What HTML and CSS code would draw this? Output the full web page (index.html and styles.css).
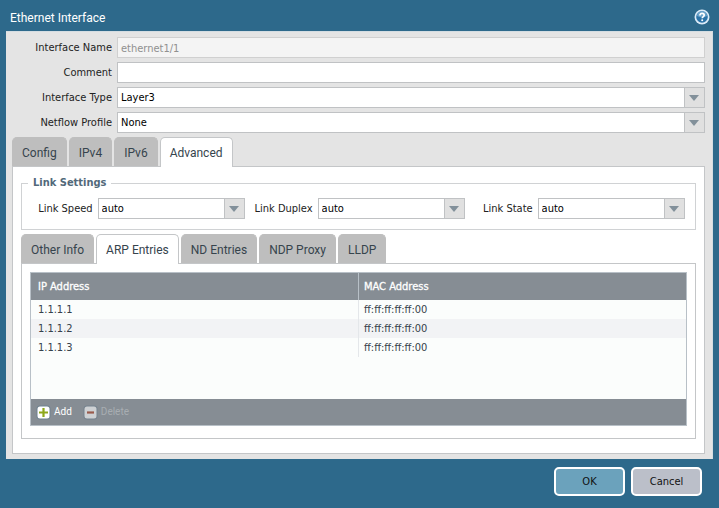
FILE: index.html
```html
<!DOCTYPE html>
<html lang="en">
<head>
	<meta charset="utf-8">
	<title>Ethernet Interface</title>
	<link rel="stylesheet" href="styles.css">
</head>
<body>
	<form class="dialog">
		<div class="titlebar">
			<h1>Ethernet Interface</h1>
			<button type="button" class="help" aria-label="Help">
				<svg width="16" height="16" viewBox="0 0 16 16">
					<circle cx="8" cy="8" r="7.5" fill="#dcebf8"/>
					<circle cx="8" cy="8" r="5.8" fill="#2c74a8"/>
					<path d="M3 7a5 5 0 0 1 10 0q-5 2.500-10 0z" fill="#6ba3ca"/>
					<path d="M5.900 6.400c0-2.800 4.300-2.600 4.300-.2 0 1.400-2 1.400-2 3.100" fill="none" stroke="#fff" stroke-width="1.700"/>
					<circle cx="8.200" cy="11.300" r="1" fill="#fff"/>
				</svg>
			</button>
		</div>

		<div class="content">
			<div class="fields">
				<label for="name">Interface Name</label>
				<input id="name" type="text" value="ethernet1/1" disabled>
				<label for="comment">Comment</label>
				<input id="comment" type="text">
				<label for="type">Interface Type</label>
				<select id="type"><option>Layer3</option></select>
				<label for="netflow">Netflow Profile</label>
				<select id="netflow"><option>None</option></select>
			</div>

			<div class="tabs" role="tablist">
				<button type="button" class="tab" role="tab">Config</button>
				<button type="button" class="tab" role="tab">IPv4</button>
				<button type="button" class="tab" role="tab">IPv6</button>
				<button type="button" class="tab active" role="tab" aria-selected="true">Advanced</button>
			</div>
			<div class="panel">
				<fieldset class="link-settings">
					<legend>Link Settings</legend>
					<div class="links">
						<div class="link">
							<label for="speed">Link Speed</label>
							<select id="speed"><option>auto</option></select>
						</div>
						<div class="link">
							<label for="duplex">Link Duplex</label>
							<select id="duplex"><option>auto</option></select>
						</div>
						<div class="link">
							<label for="state">Link State</label>
							<select id="state"><option>auto</option></select>
						</div>
					</div>
				</fieldset>

				<div class="tabs" role="tablist">
					<button type="button" class="tab" role="tab">Other Info</button>
					<button type="button" class="tab active" role="tab" aria-selected="true">ARP Entries</button>
					<button type="button" class="tab" role="tab">ND Entries</button>
					<button type="button" class="tab" role="tab">NDP Proxy</button>
					<button type="button" class="tab" role="tab">LLDP</button>
				</div>
				<div class="panel inner">
					<div class="grid">
						<table>
							<thead>
								<tr><th>IP Address</th><th>MAC Address</th></tr>
							</thead>
							<tbody>
								<tr><td>1.1.1.1</td><td>ff:ff:ff:ff:ff:00</td></tr>
								<tr><td>1.1.1.2</td><td>ff:ff:ff:ff:ff:00</td></tr>
								<tr><td>1.1.1.3</td><td>ff:ff:ff:ff:ff:00</td></tr>
							</tbody>
						</table>
						<div class="toolbar">
							<button type="button">
								<svg width="15" height="15" viewBox="0 0 15 15">
									<rect x="0.500" y="0.500" width="14" height="14" rx="3.500" fill="#6f8290"/>
									<rect x="1.500" y="1.500" width="12" height="12" rx="2.500" fill="#fff"/>
									<path d="M7.500 3v9M3 7.500h9" stroke="#8ea81c" stroke-width="2.200"/>
								</svg>
								Add
							</button>
							<button type="button" disabled>
								<svg width="15" height="15" viewBox="0 0 15 15">
									<rect x="0.500" y="0.500" width="14" height="14" rx="3.500" fill="#75828e"/>
									<rect x="1.500" y="1.500" width="12" height="12" rx="2.500" fill="#ced1d4"/>
									<path d="M4 7.500h7" stroke="#9a5a4c" stroke-width="2.200"/>
								</svg>
								Delete
							</button>
						</div>
					</div>
				</div>
			</div>
		</div>

		<div class="buttons">
			<button type="submit" class="btn ok">OK</button>
			<button type="button" class="btn">Cancel</button>
		</div>
	</form>
</body>
</html>
```
FILE: styles.css
```css
* {
	box-sizing: border-box;
}
body {
	margin: 0;
	background: #2d698b;
	color: #222;
	font: 11px/14px "DejaVu Sans Condensed", "DejaVu Sans", sans-serif;
}
button, input, select {
	font: inherit;
	margin: 0;
}
.dialog {
	display: flex;
	flex-direction: column;
	min-height: 100vh;
	padding: 0 6px;
}
.titlebar {
	display: flex;
	align-items: center;
	justify-content: space-between;
	height: 31px;
	padding: 2px 3px 0 4px;
}
.titlebar h1 {
	margin: 2px 0 0;
	color: #fff;
	font: 12px/18px Roboto, "Liberation Sans", sans-serif;
}
.help {
	display: flex;
	padding: 0;
	border: 0;
	background: none;
}
.content {
	flex: 1;
	display: flex;
	flex-direction: column;
	padding: 5px 7px 5px 6px;
	border: 1px solid #d4dde2;
	border-width: 1px 1px 0 0;
	background: #e4e4e4;
}

/* form fields */
.fields {
	display: grid;
	grid-template-columns: 100px 1fr;
	column-gap: 5px;
	row-gap: 4px;
	margin-bottom: 4px;
}
label {
	text-align: right;
	padding-top: 4px;
	white-space: nowrap;
}
input, select {
	width: 100%;
	height: 21px;
	padding: 1px 3px 0;
	border: 1px solid #c0c2c4;
	border-radius: 0;
	background: #fff;
	color: #000;
}
input:disabled {
	border-color: #d0d0d0;
	background: #f4f4f4;
	color: #909090;
}
select {
	appearance: none;
	background: #fff url("data:image/svg+xml,%3Csvg xmlns='http://www.w3.org/2000/svg' width='20' height='19'%3E%3Cpath d='M0 0h20v19H0z' fill='%23e0e0e0'/%3E%3Cpath d='M0 0h1v19H0z' fill='%23c0c2c4'/%3E%3Cpath d='M5 7h10l-5 6z' fill='%2382909a'/%3E%3C/svg%3E") no-repeat right top;
}

/* tabs */
.tabs {
	display: flex;
	gap: 2px;
}
.tab {
	height: 29px;
	padding: 2px 9px 0;
	border: 1px solid #bebebe;
	border-bottom: 0;
	border-radius: 5px 5px 0 0;
	background: #bebebe;
	color: #36444d;
	font: 12px/18px Roboto, "Liberation Sans", sans-serif;
}
.tab.active {
	position: relative;
	height: 30px;
	margin-bottom: -1px;
	padding-bottom: 1px;
	border-color: #c4c6c8;
	background: #fff;
}
.panel {
	flex: 1;
	display: flex;
	flex-direction: column;
	padding: 9px 8px 14px;
	border: 1px solid #c4c6c8;
	background: #fff;
}
.panel.inner {
	padding: 8px 8px 12px;
}

/* link settings */
.link-settings {
	min-width: 0;
	margin: 0 0 4px;
	padding: 0 10px 10px 3px;
	border: 1px solid #d0d2d4;
}
.link-settings legend {
	margin-left: 3px;
	padding: 0 5px;
	color: #52697a;
	font-weight: bold;
}
.links {
	display: grid;
	grid-template-columns: repeat(3, 1fr);
	padding-top: 8px;
}
.link {
	display: grid;
	grid-template-columns: 1fr 67%;
	column-gap: 5px;
}

/* grid */
.grid {
	flex: 1;
	display: flex;
	flex-direction: column;
	border: 1px solid #b8c0c7;
	background: #fbfdfc;
}
.grid table {
	width: 100%;
	border-collapse: collapse;
	table-layout: fixed;
	margin-bottom: auto;
}
.grid th {
	height: 27px;
	padding: 1px 6px 0 7px;
	background: #868d94;
	color: #fff;
	text-align: left;
	font-weight: normal;
	-webkit-text-stroke: 0.3px #fff;
}
.grid td {
	height: 19px;
	padding: 1px 6px 0 7px;
	color: #36414b;
}
.grid th + th {
	border-left: 1px solid #b8c0c7;
	padding-left: 5px;
}
.grid td + td {
	border-left: 1px solid #e4e7ea;
	padding-left: 5px;
}
.grid tbody tr:nth-child(even) {
	background: #f2f3f5;
}
.toolbar {
	display: flex;
	gap: 11px;
	height: 26px;
	padding: 0 5px;
	background: #868d94;
}
.toolbar button {
	display: flex;
	align-items: center;
	gap: 3px;
	padding: 0;
	border: 0;
	background: none;
	color: #fff;
	font: 10px/14px Roboto, "Liberation Sans", sans-serif;
}
.toolbar button:disabled {
	color: #a8adb2;
}

/* dialog buttons */
.buttons {
	display: flex;
	justify-content: flex-end;
	gap: 6px;
	padding: 8px 11px 12px;
}
.btn {
	width: 71px;
	height: 29px;
	padding: 0;
	border: 2px solid #fff;
	border-radius: 5px;
	background: #bbbfc9;
	color: #111;
}
.btn.ok {
	background: #6ba2bc;
}
```
